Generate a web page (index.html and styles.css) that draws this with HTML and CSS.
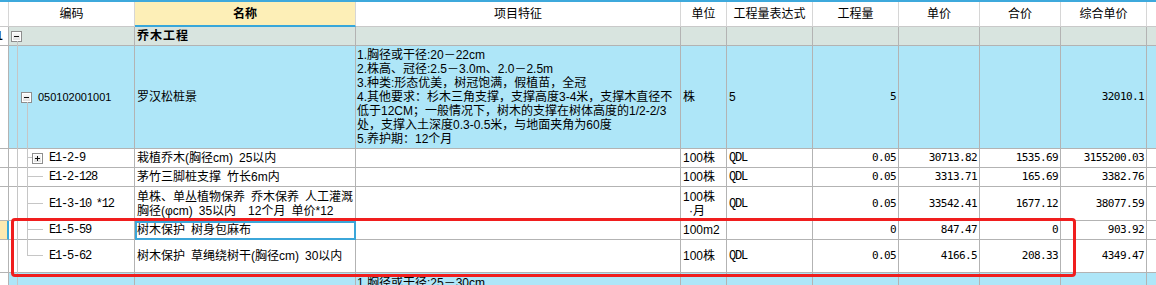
FILE: index.html
```html
<!DOCTYPE html>
<html lang="zh-CN">
<head>
<meta charset="utf-8">
<title>清单</title>
<link rel="stylesheet" href="styles.css">
</head>
<body>
<div class="sheet">
  <div class="topbar"></div>

  <div class="row head">
    <div class="c"></div>
    <div class="c">编码</div>
    <div class="c hname">名称</div>
    <div class="c">项目特征</div>
    <div class="c">单位</div>
    <div class="c">工程量表达式</div>
    <div class="c">工程量</div>
    <div class="c">单价</div>
    <div class="c">合价</div>
    <div class="c">综合单价</div>
    <div class="c"></div>
  </div>

  <div class="row r19 group">
    <div class="c gut"><span class="rowno">1</span></div>
    <div class="c code lv0"><span class="exp minus"></span></div>
    <div class="c txt gname">乔木工程</div>
    <div class="c"></div>
    <div class="c"></div>
    <div class="c"></div>
    <div class="c"></div>
    <div class="c"></div>
    <div class="c"></div>
    <div class="c"></div>
    <div class="c"></div>
  </div>

  <div class="row r103 blue">
    <div class="c gut"></div>
    <div class="c code lv1"><span class="exp minus"></span><span class="qd">050102001001</span></div>
    <div class="c txt">罗汉松桩景</div>
    <div class="c feat"><div>1.胸径或干径:20－22cm<br>2.株高、冠径:2.5－3.0m、2.0－2.5m<br>3.种类:形态优美，树冠饱满，假植苗，全冠<br>4.其他要求：杉木三角支撑，支撑高度3-4米，支撑木直径不<br>低于12CM；一般情况下，树木的支撑在树体高度的1/2-2/3<br>处，支撑入土深度0.3-0.5米，与地面夹角为60度<br>5.养护期：12个月</div></div>
    <div class="c unit">株</div>
    <div class="c expr sans">5</div>
    <div class="c num">5</div>
    <div class="c num"></div>
    <div class="c num"></div>
    <div class="c num">32010.1</div>
    <div class="c"></div>
  </div>

  <div class="row r19">
    <div class="c gut"></div>
    <div class="c code lv2"><span class="exp plus"></span><span class="de">E1-2-9</span></div>
    <div class="c txt">栽植乔木(胸径cm)&ensp;25以内</div>
    <div class="c"></div>
    <div class="c unit">100株</div>
    <div class="c expr">QDL</div>
    <div class="c num">0.05</div>
    <div class="c num">30713.82</div>
    <div class="c num">1535.69</div>
    <div class="c num">3155200.03</div>
    <div class="c"></div>
  </div>

  <div class="row r19">
    <div class="c gut"></div>
    <div class="c code leaf"><span class="de">E1-2-128</span></div>
    <div class="c txt">茅竹三脚桩支撑&ensp;竹长6m内</div>
    <div class="c"></div>
    <div class="c unit">100株</div>
    <div class="c expr">QDL</div>
    <div class="c num">0.05</div>
    <div class="c num">3313.71</div>
    <div class="c num">165.69</div>
    <div class="c num">3382.76</div>
    <div class="c"></div>
  </div>

  <div class="row r34">
    <div class="c gut"></div>
    <div class="c code leaf"><span class="de">E1-3-10&ensp;*12</span></div>
    <div class="c txt"><div>单株、单丛植物保养&ensp;乔木保养&ensp;人工灌溉<br>胸径(φcm)&ensp;35以内&ensp;&ensp;12个月&ensp;单价*12</div></div>
    <div class="c"></div>
    <div class="c unit"><div>100株<br>&ensp;·月</div></div>
    <div class="c expr">QDL</div>
    <div class="c num">0.05</div>
    <div class="c num">33542.41</div>
    <div class="c num">1677.12</div>
    <div class="c num">38077.59</div>
    <div class="c"></div>
  </div>

  <div class="row r19">
    <div class="c gut selgut"></div>
    <div class="c code leaf"><span class="de">E1-5-59</span></div>
    <div class="c txt cur">树木保护&ensp;树身包麻布</div>
    <div class="c"></div>
    <div class="c unit">100m2</div>
    <div class="c expr"></div>
    <div class="c num">0</div>
    <div class="c num">847.47</div>
    <div class="c num">0</div>
    <div class="c num">903.92</div>
    <div class="c"></div>
  </div>

  <div class="row r33">
    <div class="c gut"></div>
    <div class="c code leaf"><span class="de">E1-5-62</span></div>
    <div class="c txt">树木保护&ensp;草绳绕树干(胸径cm)&ensp;30以内</div>
    <div class="c"></div>
    <div class="c unit">100株</div>
    <div class="c expr">QDL</div>
    <div class="c num">0.05</div>
    <div class="c num">4166.5</div>
    <div class="c num">208.33</div>
    <div class="c num">4349.47</div>
    <div class="c"></div>
  </div>

  <div class="row rest blue">
    <div class="c gut"></div>
    <div class="c"></div>
    <div class="c"></div>
    <div class="c feat top"><div>1.胸径或干径:25－30cm</div></div>
    <div class="c"></div>
    <div class="c"></div>
    <div class="c"></div>
    <div class="c"></div>
    <div class="c"></div>
    <div class="c"></div>
    <div class="c"></div>
  </div>

  <svg class="tree" width="135" height="285" viewBox="0 0 135 285" aria-hidden="true">
    <g stroke="#c6c6c6" stroke-width="1" shape-rendering="crispEdges">
      <line x1="17.5" y1="41" x2="17.5" y2="285"/>
      <line x1="27.5" y1="102" x2="27.5" y2="256"/>
      <line x1="28" y1="157.5" x2="32" y2="157.5"/>
      <line x1="28" y1="176.5" x2="43" y2="176.5"/>
      <line x1="28" y1="203.5" x2="43" y2="203.5"/>
      <line x1="28" y1="229.5" x2="43" y2="229.5"/>
      <line x1="28" y1="255.5" x2="43" y2="255.5"/>
    </g>
  </svg>

  <div class="mark"></div>
</div>
</body>
</html>
```

FILE: styles.css
```css
html, body {
  margin: 0;
  padding: 0;
  background: #fff;
  overflow: hidden;
}

.sheet {
  position: relative;
  width: 1156px;
  height: 285px;
  overflow: hidden;
  font-family: "Liberation Sans", "Noto Sans CJK SC", sans-serif;
  font-size: 12px;
  color: #000;
}

.topbar {
  height: 2px;
  background: #3ea9dc;
}

.row {
  display: grid;
  grid-template-columns: 9px 126px 221px 325px 46px 86px 86px 81px 81px 86px 9px;
}

.c {
  box-sizing: border-box;
  min-width: 0;
  display: flex;
  align-items: center;
  overflow: hidden;
  white-space: nowrap;
  line-height: 14px;
  border-right: 1px solid #b3b3b3;
  border-bottom: 1px solid #b3b3b3;
}

.row .c:last-child {
  border-right: none;
}

/* header */
.head {
  height: 25px;
}
.head .c {
  justify-content: center;
  border-right-color: #d6d6d6;
  border-bottom-color: #c9c9c9;
  background: #fff;
}
.head .hname {
  background: #fdefb7;
  border-bottom: 2px solid #38a7da;
  font-weight: bold;
}

/* row heights */
.r19 { height: 19px; }
.r33 { height: 33px; }
.r34 { height: 34px; }
.r103 { height: 103px; }
.rest { height: 12px; }
.rest .c { border-bottom: none; }

/* row colours */
.group .c { background: #d8e4df; }
.blue .c { background: #aee6f8; }
.row .gut { background: #fff; }
.row .selgut {
  background: #fde9b1;
  border-right: 2px solid #38a7da;
}

.rowno {
  font-family: "Liberation Sans", sans-serif;
  font-weight: bold;
  font-size: 12px;
  margin-left: -4px;
}

/* code column */
.code {
  gap: 6px;
}
.lv0 { padding-left: 2px; }
.lv1 { padding-left: 12px; }
.lv2 { padding-left: 23px; }
.leaf { padding-left: 40px; }

.qd {
  font-family: "Liberation Sans", sans-serif;
  font-size: 11px;
}
.de {
  font-family: "Liberation Mono", monospace;
  font-size: 12px;
  letter-spacing: -1.2px;
}

.exp {
  box-sizing: border-box;
  flex: none;
  width: 11px;
  height: 11px;
  border: 1px solid #8e8e8e;
  background: linear-gradient(#fbfbfb, #dedede);
  box-shadow: inset 0 0 0 1px #fff;
  display: grid;
  place-items: center;
}
.exp::before {
  content: "";
  grid-area: 1 / 1;
  width: 5px;
  height: 1px;
  background: #111;
}
.plus::after {
  content: "";
  grid-area: 1 / 1;
  width: 1px;
  height: 5px;
  background: #111;
}

/* text cells */
.txt {
  padding-left: 2px;
}
.gname {
  font-weight: bold;
  font-size: 12px;
  letter-spacing: 1px;
}
.feat {
  padding-left: 1px;
}
.feat.top {
  align-items: flex-start;
  padding-top: 3px;
}
.unit {
  padding-left: 2px;
}
.expr {
  padding-left: 2px;
  font-family: "Liberation Mono", monospace;
  font-size: 12px;
  letter-spacing: -1.2px;
}
.expr.sans {
  font-family: "Liberation Sans", sans-serif;
  letter-spacing: 0;
}
.num {
  justify-content: flex-end;
  padding-right: 2px;
  font-family: "DejaVu Sans Mono", monospace;
  font-size: 11px;
  letter-spacing: -0.6px;
}

.cur {
  outline: 2px solid #3ba6d9;
  outline-offset: -2px;
}

/* overlays */
.tree {
  position: absolute;
  left: 0;
  top: 0;
  pointer-events: none;
}

.mark {
  position: absolute;
  left: 11px;
  top: 218px;
  width: 1065px;
  height: 59px;
  box-sizing: border-box;
  border: 3px solid #f01e1e;
  border-radius: 4px;
  pointer-events: none;
}
```
